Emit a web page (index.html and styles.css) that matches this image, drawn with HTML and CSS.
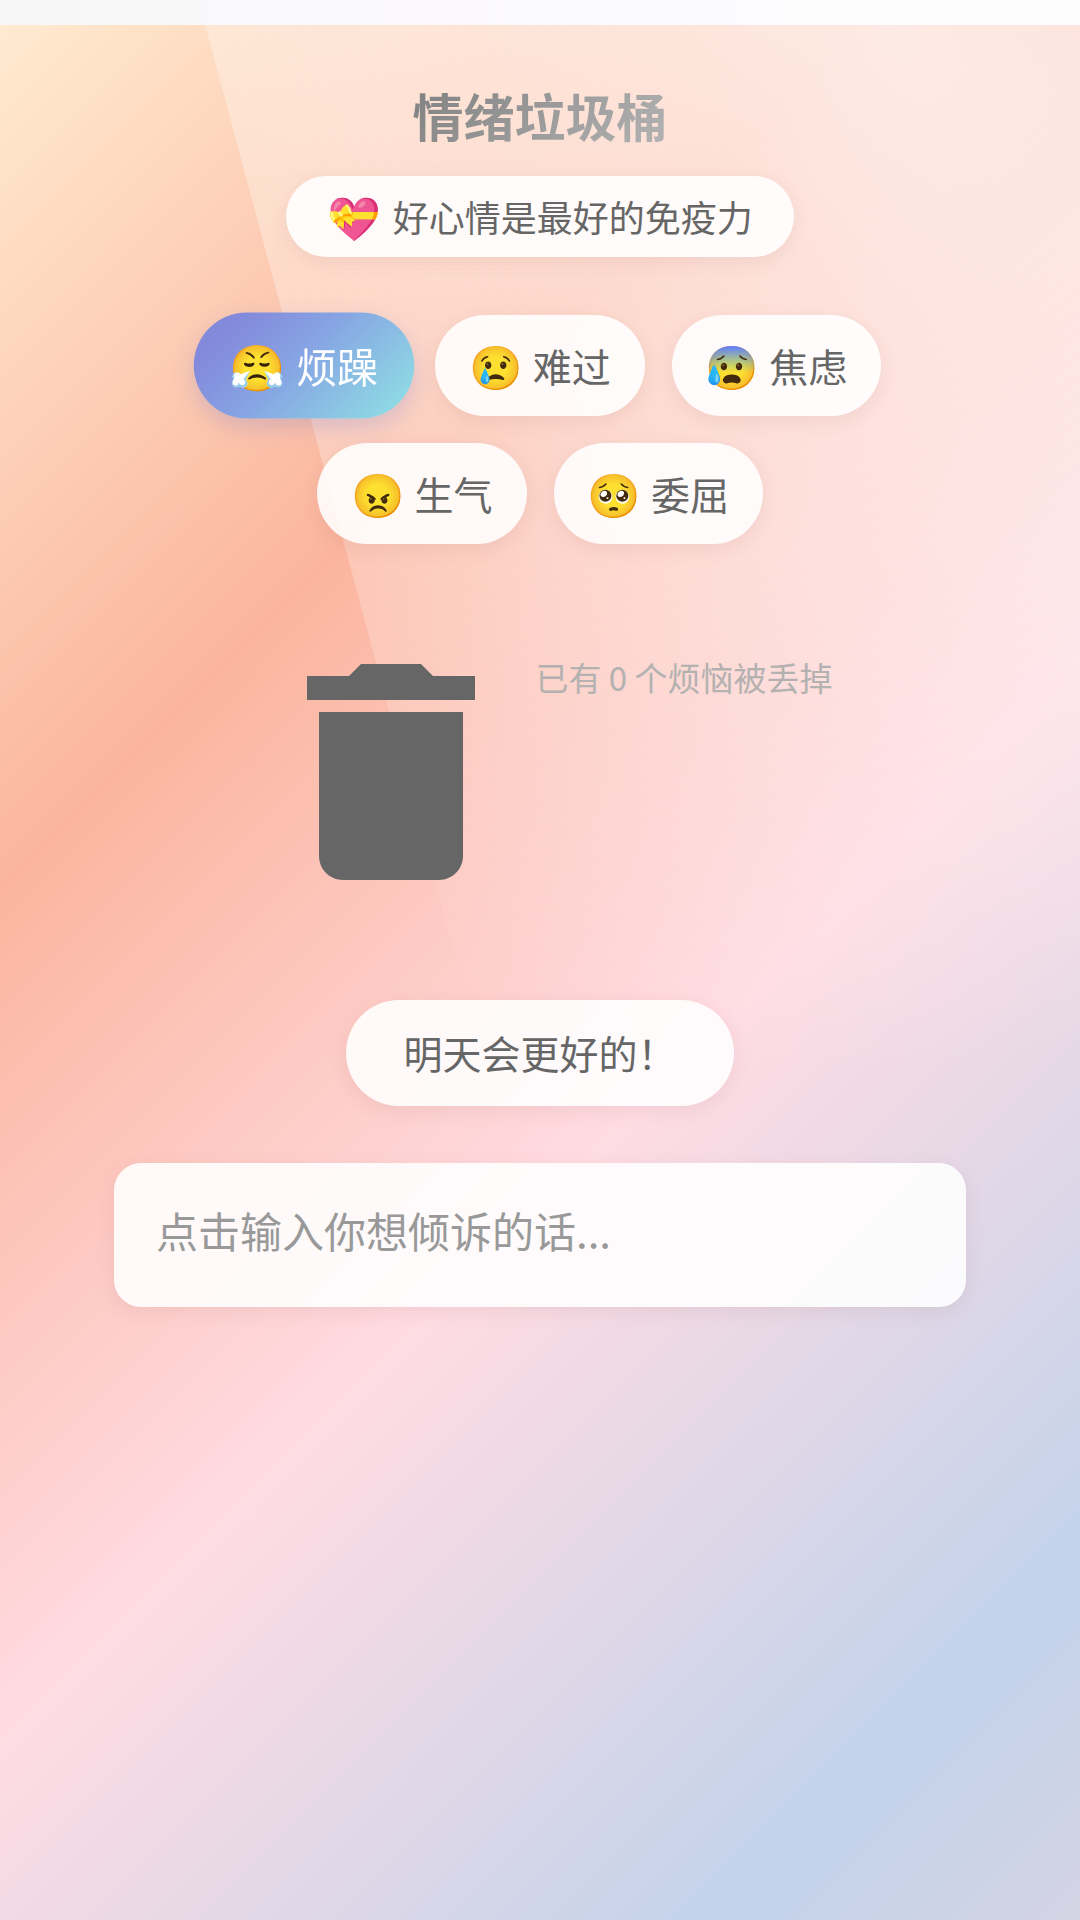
FILE: index.html
```html
<!DOCTYPE html>
<html lang="zh-CN">
<head>
  <meta charset="UTF-8" />
  <meta name="viewport" content="width=device-width, initial-scale=1.0"/>
  <title>情绪垃圾桶</title>
  <link rel="stylesheet" href="styles.css">
</head>
<body>
  <div class="top-strip"></div>

  <main class="page">
    <h1 class="title">情绪垃圾桶</h1>
    <p class="slogan"><span class="emoji">💝</span>好心情是最好的免疫力</p>

    <!-- Mood picker -->
    <div class="moods">
      <button class="mood active" type="button"><span class="emoji">😤</span>烦躁</button>
      <button class="mood" type="button"><span class="emoji">😢</span>难过</button>
      <button class="mood" type="button"><span class="emoji">😰</span>焦虑</button>
      <button class="mood" type="button"><span class="emoji">😠</span>生气</button>
      <button class="mood" type="button"><span class="emoji">🥺</span>委屈</button>
    </div>

    <!-- Trash can and counter -->
    <div class="bin">
      <svg class="bin-icon" viewBox="0 0 24 24" aria-hidden="true">
        <path d="M6 19c0 1.1.9 2 2 2h8c1.1 0 2-.9 2-2V7H6v12zM19 4h-3.5l-1-1h-5l-1 1H5v2h14V4z"/>
      </svg>
      <div class="counter">已有 <span id="count">0</span> 个烦恼被丢掉</div>
    </div>

    <p class="bubble">明天会更好的！</p>

    <input class="worry" type="text" aria-label="想倾诉的话" placeholder="点击输入你想倾诉的话...">
  </main>
</body>
</html>
```
FILE: styles.css
```css
* { box-sizing: border-box; margin: 0; padding: 0; }

body {
  min-height: 100vh;
  display: flex;
  flex-direction: column;
  font-family: "Noto Sans CJK SC", "Noto Color Emoji", sans-serif;
  color: #666;
}

.top-strip { height: 25px; background: linear-gradient(90deg, #f7f7f7, #fbf9fd 40%, #fdfdfd); }

.page {
  flex: 1;
  position: relative;
  display: flex;
  flex-direction: column;
  align-items: center;
  padding: 54px 114px;
  background: linear-gradient(135deg, #ffebd0 0%, #fbb59e 29%, #ffdce3 58%, #c2d3eb 88%, #d4d3e4 100%);
}

/* Soft light falling in from the top right */
.page::before {
  content: "";
  position: absolute;
  inset: 0;
  background: radial-gradient(circle at 82% 0%, rgba(255,255,255,0.72) 0, rgba(255,255,255,0.56) 260px, rgba(255,255,255,0.42) 520px, rgba(255,255,255,0.24) 750px, transparent 1050px);
  clip-path: polygon(19% 0, 100% 0, 100% 100%, 66% 100%);
  pointer-events: none;
}

.page > * { position: relative; }

.title {
  margin-bottom: 25px;
  font-size: 51px;
  line-height: 72px;
  font-weight: bold;
  background: linear-gradient(135deg, #808080, #b4b4b4);
  -webkit-background-clip: text;
  background-clip: text;
  color: transparent;
}

.slogan, .mood, .bubble, .worry { background: rgba(255,255,255,0.88); box-shadow: 0 5px 18px rgba(150,90,90,0.11); }

.slogan, .mood { display: flex; align-items: center; line-height: 57px; }
.emoji { font-size: 43px; line-height: 48px; margin-bottom: 4px; }

.slogan {
  gap: 12px;
  margin-bottom: 58px;
  padding: 12px 41px;
  border-radius: 42px;
  font-size: 36px;
}

.moods { display: flex; flex-wrap: wrap; justify-content: center; gap: 27px; margin-bottom: 84px; }
.mood {
  gap: 10px;
  padding: 22px 34px;
  border: none;
  border-radius: 52px;
  font-family: inherit;
  font-size: 39px;
  color: #666;
  cursor: pointer;
}
.mood.active {
  background: linear-gradient(135deg, #8389db 15%, #86a3e3 45%, #8ed8e4 90%);
  box-shadow: 0 8px 20px rgba(110,120,210,0.25);
  color: #fff;
  transform: scale(1.05);
}

.bin { display: flex; align-items: flex-start; margin-bottom: 84px; }
.bin-icon { width: 288px; height: 288px; fill: #666; }
.counter { padding-top: 25px; font-size: 33px; line-height: 48px; color: #b4b1b1; }

.bubble { margin-bottom: 57px; padding: 23px 57px 25px; border-radius: 53px; font-size: 39px; line-height: 58px; }

.worry {
  width: 100%;
  padding: 37px 42px 47px;
  border: none;
  outline: none;
  border-radius: 27px;
  font-family: inherit;
  font-size: 42px;
  line-height: 60px;
  color: #666;
}
.worry::placeholder { color: #999; opacity: 1; }
```
